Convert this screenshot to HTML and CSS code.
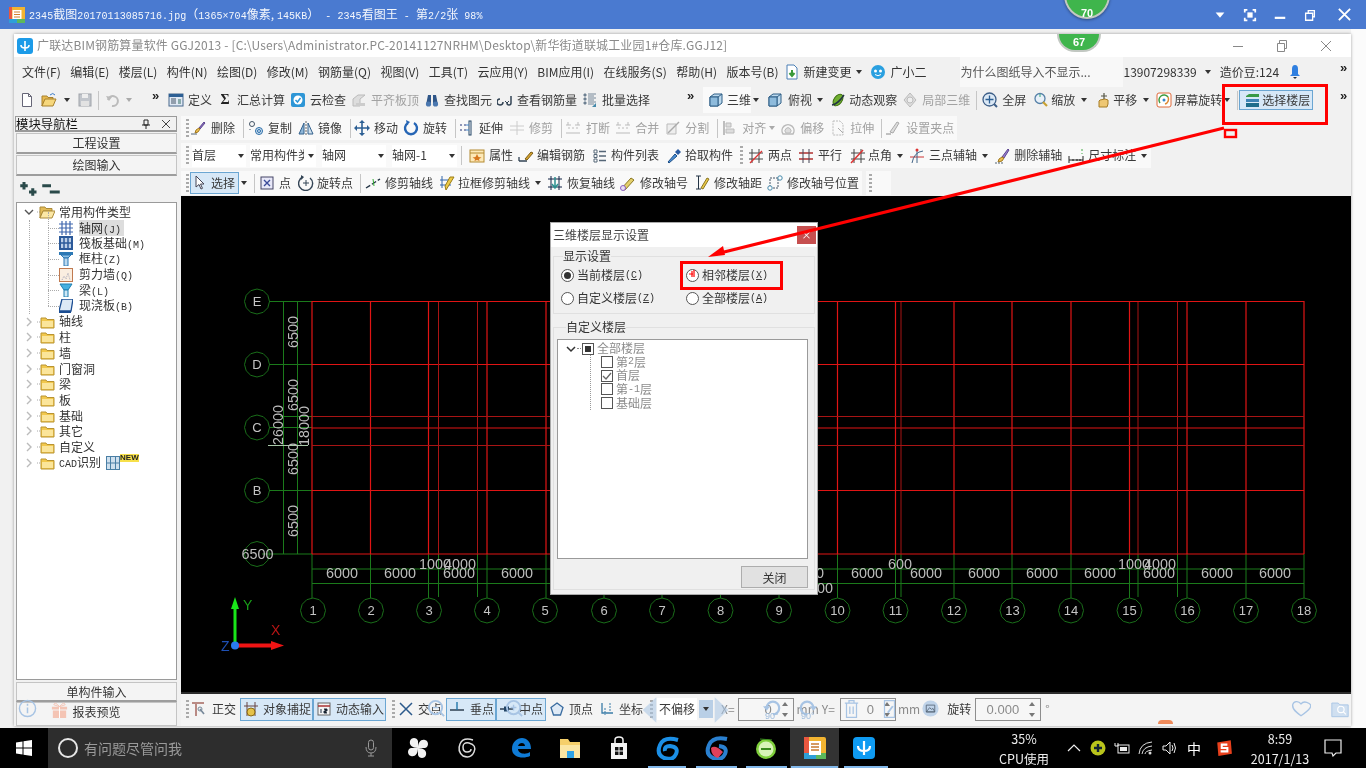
FILE: index.html
```html
<!DOCTYPE html>
<html lang="zh-CN">
<head>
<meta charset="utf-8">
<title>2345看图王</title>
<link rel="stylesheet" href="styles.css">
</head>
<body>
<svg class="sprite" xmlns="http://www.w3.org/2000/svg">
<defs>
<symbol id="i-new" viewBox="0 0 16 16"><path d="M3.5 1.5h6l3 3v10h-9z" fill="#fff" stroke="#667"/><path d="M9.5 1.5v3h3" fill="none" stroke="#667"/></symbol>
<symbol id="i-open" viewBox="0 0 16 16"><path d="M1 4h5l1 1.500h5v2H4L1 14z" fill="#e7b94e" stroke="#a8812c"/><path d="M1 14l3-7h11l-3 7z" fill="#f6d77c" stroke="#a8812c"/><path d="M9 3q3-3 5 0" fill="none" stroke="#3a7bc8"/></symbol>
<symbol id="i-save" viewBox="0 0 16 16"><rect x="2" y="2" width="12" height="12" fill="#c2c6cc" stroke="#a0a4aa"/><rect x="5" y="2" width="6" height="4" fill="#eee"/><rect x="4" y="9" width="8" height="5" fill="#e2e2e2"/></symbol>
<symbol id="i-undo" viewBox="0 0 16 16"><path d="M3 8a5 5 0 1 1 4 6" fill="none" stroke="#bbb" stroke-width="2"/><path d="M1 4l3 5 3-4z" fill="#bbb"/></symbol>
<symbol id="i-def" viewBox="0 0 16 16"><rect x="1" y="2" width="14" height="12" fill="#dfe8f4" stroke="#48688c"/><rect x="1" y="2" width="14" height="3" fill="#2c5f94"/><path d="M3 7h5M3 9h5M3 11h5" stroke="#456"/><rect x="10" y="7" width="3" height="5" fill="#8aa"/></symbol>
<symbol id="i-check" viewBox="0 0 16 16"><rect x="1" y="1" width="14" height="14" rx="2" fill="#2e96d6"/><circle cx="8" cy="8" r="4.500" fill="#fff"/><path d="M5.500 8l2 2 3-4" fill="none" stroke="#2e96d6" stroke-width="1.500"/></symbol>
<symbol id="i-flat" viewBox="0 0 16 16"><path d="M2 14V7l5-4 7 0-5 4v7z" fill="#ddd" stroke="#bbb"/><path d="M5 14h9v-3H5z" fill="#ccc"/></symbol>
<symbol id="i-bino" viewBox="0 0 16 16"><path d="M2 13l2-10h3v10zM9 13V3h3l2 10z" fill="#2f5688"/><circle cx="4.500" cy="12" r="2.600" fill="#4b78b0"/><circle cx="11.500" cy="12" r="2.600" fill="#4b78b0"/></symbol>
<symbol id="i-eye" viewBox="0 0 16 16"><path d="M6 10a3 3 0 1 1-3-3M14 4v7a2 2 0 0 1-4 0" fill="none" stroke="#345" stroke-width="1.500"/><path d="M8 9l2 2 2-2" fill="none" stroke="#345"/></symbol>
<symbol id="i-batch" viewBox="0 0 16 16"><path d="M2 2h2v2H2zM2 6h2v2H2zM2 10h2v2H2zM6 2h8M6 6h8M6 10h8M6 4h6M6 8h6M6 12h6" fill="#567" stroke="#789"/><path d="M10 15l4-4v4z" fill="#48a"/></symbol>
<symbol id="i-cube" viewBox="0 0 16 16"><path d="M2 5l4-3h8v9l-4 3H2z" fill="#bcd9ee" stroke="#2f5f86"/><path d="M2 5h8v9M10 5l4-3" fill="none" stroke="#2f5f86"/><path d="M2 5h8v9H2z" fill="#8ebbdc" stroke="#2f5f86"/></symbol>
<symbol id="i-orbit" viewBox="0 0 16 16"><ellipse cx="8" cy="8" rx="4" ry="6.500" transform="rotate(35 8 8)" fill="#6fae2f" stroke="#3d6e10"/><path d="M2 13Q8 12 14 3" fill="none" stroke="#234" stroke-width="1.500"/></symbol>
<symbol id="i-local" viewBox="0 0 16 16"><path d="M8 1l6 7-6 7-6-7z" fill="#ddd" stroke="#bbb"/><circle cx="8" cy="8" r="3" fill="#eee" stroke="#bbb"/></symbol>
<symbol id="i-full" viewBox="0 0 16 16"><circle cx="7.500" cy="7.500" r="6.500" fill="#dbe8f5" stroke="#3e5f88" stroke-width="1.300"/><path d="M7.500 3.500v8M3.500 7.500h8" stroke="#2c5f94" stroke-width="1.300"/><path d="M12 12l3 3" stroke="#3e5f88" stroke-width="2"/></symbol>
<symbol id="i-zoom" viewBox="0 0 16 16"><circle cx="7" cy="6.500" r="5" fill="#e8f0f8" stroke="#5580a8" stroke-width="1.300"/><path d="M10 10l4 4" stroke="#c8a030" stroke-width="2.200"/><path d="M7 2v3" stroke="#3a7"/></symbol>
<symbol id="i-hand" viewBox="0 0 16 16"><path d="M4 15V9l1-1 5-1 3 1v4l-1 3z" fill="#eec773" stroke="#a67c25"/><path d="M9 7V1M6 4h6" stroke="#554" stroke-width="1.200"/></symbol>
<symbol id="i-rot" viewBox="0 0 16 16"><rect x="1" y="1" width="14" height="14" rx="2" fill="#fff" stroke="#e06a3b"/><path d="M4 11a5 5 0 0 1 8-6" fill="none" stroke="#3f9c3f" stroke-width="1.500"/><path d="M12 5a5 5 0 0 1-3 7" fill="none" stroke="#d83" stroke-width="1.500"/><circle cx="8" cy="8" r="1.500" fill="#38c"/></symbol>
<symbol id="i-floors" viewBox="0 0 16 16"><path d="M2 4l3-2h10v3H2z" fill="#3a9a46"/><path d="M2 7h13v3H2z" fill="#3e84b5"/><path d="M2 11h13v4H2z" fill="#1f6d8c"/></symbol>
<symbol id="i-brush" viewBox="0 0 16 16"><path d="M9 8l5-6 1 1-5 6z" fill="#8a6fc0" stroke="#5d4790"/><path d="M9 8l1 1-2 3-3 1 1-3z" fill="#f0c050" stroke="#a07820"/><path d="M1 14h6" stroke="#567"/></symbol>
<symbol id="i-copy" viewBox="0 0 16 16"><circle cx="4" cy="4" r="2.500" fill="none" stroke="#456"/><path d="M2 9v2" stroke="#456" stroke-dasharray="1 1"/><circle cx="11" cy="11" r="3.500" fill="#cfe2f3" stroke="#2c6ea8"/><circle cx="11" cy="11" r="1.500" fill="none" stroke="#2c6ea8"/></symbol>
<symbol id="i-mirror" viewBox="0 0 16 16"><path d="M6 3L1 14h5z" fill="#8eb6d8" stroke="#33618c"/><path d="M10 3l5 11h-5z" fill="#cfe0ee" stroke="#33618c"/><path d="M8 1v14" stroke="#666" stroke-dasharray="2 1"/></symbol>
<symbol id="i-move" viewBox="0 0 16 16"><path d="M8 1v14M1 8h14" stroke="#2c5f94" stroke-width="1.600"/><path d="M8 0l3 3H5zM8 16l3-3H5zM0 8l3-3v6zM16 8l-3-3v6z" fill="#2c5f94"/></symbol>
<symbol id="i-spin" viewBox="0 0 16 16"><path d="M5 3a6 6 0 1 0 6 0" fill="none" stroke="#2766b5" stroke-width="2.400"/><path d="M3 0l4 2-3 3z" fill="#2766b5"/></symbol>
<symbol id="i-ext" viewBox="0 0 16 16"><path d="M1 5h2M5 5h2M1 10h2M5 10h2" stroke="#237"/><rect x="10" y="1" width="2" height="14" fill="#fff" stroke="#246"/><path d="M7 5h3M7 10h3" stroke="#48c"/></symbol>
<symbol id="i-trim" viewBox="0 0 16 16"><path d="M8 1v14M1 6h14M1 10h14" stroke="#ccc"/></symbol>
<symbol id="i-break" viewBox="0 0 16 16"><path d="M1 5h5M10 5h5M1 13h14M3 2v3M13 2v3" stroke="#bbb"/><path d="M3 8h10" stroke="#bbb" stroke-dasharray="2 2"/></symbol>
<symbol id="i-split" viewBox="0 0 16 16"><path d="M2 14V4h9v10z" fill="#eee" stroke="#bbb"/><path d="M3 13L14 2" stroke="#aaa" stroke-width="1.500"/></symbol>
<symbol id="i-align" viewBox="0 0 16 16"><path d="M3 1v14" stroke="#aaa" stroke-width="1.500"/><path d="M5 3h5v4H5zM5 9h8v4H5z" fill="#ddd" stroke="#bbb"/></symbol>
<symbol id="i-off" viewBox="0 0 16 16"><path d="M3 14a6 6 0 1 1 10 0z" fill="none" stroke="#bbb" stroke-width="1.500"/><path d="M6 13a3 3 0 1 1 4 0z" fill="#ddd" stroke="#bbb"/></symbol>
<symbol id="i-str" viewBox="0 0 16 16"><path d="M3 1h7l3 3v11H3z" fill="none" stroke="#bbb" stroke-dasharray="2 1"/><path d="M8 8l5 5" stroke="#aaa"/></symbol>
<symbol id="i-grip" viewBox="0 0 16 16"><path d="M5 12L12 2l2 1-6 10z" fill="#ddd" stroke="#aaa"/><path d="M1 14h5" stroke="#888"/></symbol>
<symbol id="i-prop" viewBox="0 0 16 16"><rect x="1" y="2" width="14" height="12" fill="#fde9b8" stroke="#b48a30"/><path d="M1 5h14" stroke="#b48a30"/><path d="M8 6l1.500 3 3 .5-2.500 1.500.5 2-2.500-1-2.500 1 .5-2L3.500 9.500l3-.5z" fill="#d77820"/></symbol>
<symbol id="i-edit" viewBox="0 0 16 16"><path d="M1 13h8M1 9v4" stroke="#345" stroke-width="1.300"/><path d="M7 11l6-7 2 1-6 7z" fill="#d8a530" stroke="#7a5b14"/></symbol>
<symbol id="i-list" viewBox="0 0 16 16"><path d="M2 2h3v3H2zM2 6.500h3v3H2zM2 11h3v3H2z" fill="#fff" stroke="#567"/><path d="M7 3.500h7M7 8h7M7 12.500h7" stroke="#567" stroke-width="1.500"/></symbol>
<symbol id="i-pick" viewBox="0 0 16 16"><path d="M2 14l7-8 2 2-8 7z" fill="#4b8fd6" stroke="#1f4f85"/><path d="M9 4l3-3 3 3-3 3z" fill="#2a5aa0"/></symbol>
<symbol id="i-two" viewBox="0 0 16 16"><path d="M4 1v14M11 1v14M1 5h14M1 11h14" stroke="#444"/><path d="M2 15L14 3" stroke="#d33" stroke-width="1.300"/></symbol>
<symbol id="i-par" viewBox="0 0 16 16"><path d="M1 5h14M1 11h14" stroke="#b03030" stroke-width="1.300"/><path d="M5 1v14M11 1v14" stroke="#445"/></symbol>
<symbol id="i-ang" viewBox="0 0 16 16"><path d="M4 1v14M11 1v14M1 5h14M1 11h14" stroke="#444"/><path d="M1 15L13 2" stroke="#d33" stroke-width="1.500"/></symbol>
<symbol id="i-three" viewBox="0 0 16 16"><path d="M1 9h14" stroke="#c33"/><path d="M8 2v13M3 15Q5 4 14 3" fill="none" stroke="#468"/><circle cx="8" cy="2" r="1.500" fill="#d33"/></symbol>
<symbol id="i-delax" viewBox="0 0 16 16"><path d="M8 9l6-8 1 1-5 8z" fill="#9a7fd0" stroke="#5d4790"/><path d="M8 9l2 1-2 3-4 1 1-3z" fill="#eec050" stroke="#a07820"/><path d="M1 15h8" stroke="#567" stroke-dasharray="2 1"/></symbol>
<symbol id="i-dim" viewBox="0 0 16 16"><path d="M1 8v7M15 8v7M1 12h14" stroke="#222"/><path d="M5 11v2M9 11v2M12 11v2" stroke="#222"/><path d="M14 1v2M14 5v1" stroke="#4a4"/></symbol>
<symbol id="i-cursor" viewBox="0 0 16 16"><path d="M5 1v11l3-2.500 2 4.500 1.500-.7-2-4.300H13z" fill="#fff" stroke="#445"/></symbol>
<symbol id="i-point" viewBox="0 0 16 16"><rect x="2" y="2" width="12" height="12" fill="#e8e8f8" stroke="#446"/><path d="M5 5l6 6M11 5l-6 6" stroke="#3a4a9a" stroke-width="1.400"/></symbol>
<symbol id="i-rotp" viewBox="0 0 16 16"><path d="M5 2a7 7 0 1 0 7 1" fill="none" stroke="#345" stroke-width="1.400"/><path d="M8 5v6M5 8h6" stroke="#345"/><path d="M3 0l3 2-3 3z" fill="#345"/></symbol>
<symbol id="i-trax" viewBox="0 0 16 16"><path d="M1 13L15 4" stroke="#234" stroke-width="1.400" stroke-dasharray="5 2"/><path d="M8 4l1 7" stroke="#3a3"/></symbol>
<symbol id="i-box" viewBox="0 0 16 16"><path d="M3 1v12M1 5h11M1 10h11" stroke="#36a"/><path d="M7 15L15 2l-4 0-5 9z" fill="#ecc947" stroke="#9a7d16"/></symbol>
<symbol id="i-rest" viewBox="0 0 16 16"><path d="M4 1v14M12 1v14M1 4h14M1 12h14" stroke="#124"/><path d="M8 2v10M5 9l3 4 3-4" fill="none" stroke="#2a8f8f" stroke-width="1.500"/></symbol>
<symbol id="i-eno" viewBox="0 0 16 16"><path d="M1 14L11 3l3 2-9 10z" fill="#e3cf6b" stroke="#8a7622"/><circle cx="3" cy="13" r="2.500" fill="#e8dff4" stroke="#8a60c0"/></symbol>
<symbol id="i-edist" viewBox="0 0 16 16"><path d="M2 1h5M4.500 1v13M2 14h5" stroke="#234"/><path d="M7 13l6-10 2 1-6 10z" fill="#ecc947" stroke="#8a7622"/></symbol>
<symbol id="i-epos" viewBox="0 0 16 16"><path d="M3 3h8v10H3z" fill="none" stroke="#456" stroke-dasharray="2 1"/><circle cx="13" cy="3" r="2.200" fill="#fff" stroke="#48a"/><circle cx="3" cy="13" r="2.200" fill="#fff" stroke="#48a"/></symbol>
<symbol id="i-ortho" viewBox="0 0 18 18"><path d="M2 3h12M6 3v13" stroke="#b98a84" stroke-width="2"/><path d="M10 9l4 5" stroke="#789" stroke-width="1.600"/><circle cx="10" cy="9" r="2" fill="none" stroke="#789"/></symbol>
<symbol id="i-snap" viewBox="0 0 16 16"><path d="M4 1v14M12 1v14M1 5h14" stroke="#644"/><circle cx="8" cy="11" r="4" fill="#e5c24a" stroke="#8a6a14"/></symbol>
<symbol id="i-dyn" viewBox="0 0 16 16"><rect x="2" y="2" width="12" height="12" fill="#f4f4f4" stroke="#666"/><path d="M2 5h12" stroke="#a33" stroke-width="1.500"/><path d="M5 8v4M8 8h3v2H8v2h3" stroke="#234"/></symbol>
<symbol id="i-cross" viewBox="0 0 16 16"><path d="M2 2l12 12M14 2L2 14" stroke="#2c5a8c" stroke-width="1.500"/></symbol>
<symbol id="i-perp" viewBox="0 0 16 16"><path d="M1 9h14" stroke="#234" stroke-width="1.400"/><path d="M8 1v8" stroke="#27a" stroke-width="1.400"/></symbol>
<symbol id="i-mid" viewBox="0 0 16 16"><path d="M1 8h14" stroke="#234" stroke-width="1.400"/><rect x="5" y="5.500" width="5" height="5" fill="#246"/></symbol>
<symbol id="i-apex" viewBox="0 0 16 16"><path d="M8 2l6 4.500-2.500 7.500h-7L2 6.500z" fill="#dfeaf6" stroke="#3a6ca0" stroke-width="1.300"/></symbol>
<symbol id="i-coord" viewBox="0 0 16 16"><path d="M3 2v10h11" fill="none" stroke="#3a7ca8" stroke-width="1.300"/><path d="M6 7v7M11 2v9" stroke="#3a7ca8" stroke-dasharray="2 1"/></symbol>
<symbol id="i-folder" viewBox="0 0 18 14"><path d="M0 7h4" stroke="#aaa" stroke-dasharray="1 1"/><path d="M4 3h5l1 1.500h7V13H4z" fill="#f2c84d" stroke="#b89332"/><path d="M5 6h11v6H5z" fill="#fbe59a"/></symbol>
<symbol id="i-fopen" viewBox="0 0 18 14"><path d="M0 7h3" stroke="#aaa" stroke-dasharray="1 1"/><path d="M3 2h5l1 1.500h6V6H6l-3 7z" fill="#e3bb57" stroke="#ab8a38"/><path d="M3 13l3-7h12l-3 7z" fill="#fbe7a5" stroke="#ab8a38"/></symbol>
<symbol id="t-grid" viewBox="0 0 14 14"><path d="M0 3h14M0 7h14M0 11h14M3 0v14M7 0v14M11 0v14" stroke="#3f67ad" stroke-width="1.200"/></symbol>
<symbol id="t-raft" viewBox="0 0 14 14"><rect width="14" height="14" fill="#2c5a9a"/><path d="M2 2h10v10H2z" fill="#bcd0e8"/><path d="M5 0v14M9 0v14M0 7h14" stroke="#2c5a9a" stroke-width="1.500"/></symbol>
<symbol id="t-col" viewBox="0 0 14 14"><path d="M0 0h14v3H0z" fill="#2d79b5"/><path d="M2 3h10L9 6H5z" fill="#8ec0e4" stroke="#2d79b5"/><path d="M5 6h4v8H5z" fill="#bcd9ee" stroke="#2d79b5"/></symbol>
<symbol id="t-wall" viewBox="0 0 14 14"><rect x=".5" y=".5" width="13" height="13" fill="#fbeee0" stroke="#c07a50"/><path d="M3 12l2-4 2 3 2-6 2 7" fill="none" stroke="#aab" stroke-dasharray="1 1"/></symbol>
<symbol id="t-beam" viewBox="0 0 14 14"><path d="M1 1h12L9 7H5z" fill="#46b0e0" stroke="#1f7fb0"/><path d="M5 7h4v7H5z" fill="#cfe8f6" stroke="#1f7fb0"/></symbol>
<symbol id="t-slab" viewBox="0 0 14 14"><path d="M3 0h11l-2 12H0z" fill="#dce9f6" stroke="#1b4d92" stroke-width="1.300"/><path d="M0 12h12v2H0z" fill="#1b4d92"/></symbol>
</defs>
</svg>

<div class="screen">
  <header class="viewer-bar">
    <svg class="viewer-logo" viewBox="0 0 16 16"><rect width="16" height="16" fill="#f2b431"/><rect x="0" y="0" width="3" height="16" fill="#e9573f"/><rect x="0" y="12" width="16" height="4" fill="#2e9fd8"/><rect x="8" y="12" width="8" height="4" fill="#5cb85c"/><rect x="3.500" y="3" width="9" height="9" fill="#fff"/><path d="M5 5h6M5 7.500h6M5 10h6" stroke="#d08030"/></svg>
    <div class="viewer-title"><span class="lt">2345</span>截图<span class="lt">20170113085716.jpg</span>（<span class="lt">1365×704</span>像素, <span class="lt">145KB</span>）<span class="lt"> - 2345</span>看图王<span class="lt"> - </span>第<span class="lt">2/2</span>张<span class="lt"> 98%</span></div>
    <div class="viewer-ctrls">
      <svg class="vc" viewBox="0 0 16 16"><path d="M3 5h10l-5 6z" fill="#fff"/></svg>
      <svg class="vc" viewBox="0 0 16 16"><path d="M2 5V2h3M11 2h3v3M14 11v3h-3M5 14H2v-3" fill="none" stroke="#fff" stroke-width="2"/><rect x="5" y="5" width="6" height="6" fill="#fff"/></svg>
      <svg class="vc" viewBox="0 0 16 16"><rect x="2" y="10" width="12" height="2.500" fill="#fff"/></svg>
      <svg class="vc" viewBox="0 0 16 16"><path d="M3 6h8v8H3zM6 6V3h7v7h-2" fill="none" stroke="#fff" stroke-width="1.500"/></svg>
      <svg class="vc vc-x" viewBox="0 0 16 16"><path d="M2 2l12 12M14 2L2 14" stroke="#fff" stroke-width="2"/></svg>
    </div>
  </header>

  <div class="stage">
    <main class="app">
      <div class="app-title">
        <svg class="app-logo" viewBox="0 0 16 16"><rect width="16" height="16" rx="3" fill="#1c9be8"/><path d="M8 3v10M4 7q0 3 4 3t4-3" fill="none" stroke="#fff" stroke-width="1.600"/></svg>
        <span class="app-name">广联达BIM钢筋算量软件 GGJ2013 - [C:\Users\Administrator.PC-20141127NRHM\Desktop\新华街道联城工业园1#仓库.GGJ12]</span>
        <div class="win-ctrls">
          <svg class="wc" viewBox="0 0 12 12"><path d="M1 6.500h10" stroke="#888"/></svg>
          <svg class="wc" viewBox="0 0 12 12"><path d="M1.500 3.500h7v8h-7zM3.500 3.500V.5h7v8h-2" fill="none" stroke="#888"/></svg>
          <svg class="wc" viewBox="0 0 12 12"><path d="M1 1l10 10M11 1L1 11" stroke="#888"/></svg>
        </div>
      </div>

      <nav class="menu">
        <span class="mi m8">文件(F)</span><span class="mi mg">编辑(E)</span><span class="mi mg">楼层(L)</span><span class="mi mg">构件(N)</span><span class="mi mg">绘图(D)</span><span class="mi mg">修改(M)</span><span class="mi mg">钢筋量(Q)</span><span class="mi mg">视图(V)</span><span class="mi mg">工具(T)</span><span class="mi mg">云应用(Y)</span><span class="mi mg">BIM应用(I)</span><span class="mi mg">在线服务(S)</span><span class="mi mg">帮助(H)</span><span class="mi mg">版本号(B)</span>
        <svg class="ic m6" viewBox="0 0 16 16"><path d="M3 1h7l3 3v11H3z" fill="#fff" stroke="#4a7fb5"/><path d="M8 6v5M5.500 9L8 12l2.500-3" fill="none" stroke="#3a9a3a" stroke-width="2"/></svg>
        <span class="mi m3">新建变更</span><span class="dd m4"></span>
        <svg class="ic m7" viewBox="0 0 16 16"><circle cx="8" cy="8" r="7" fill="#2aa0e0"/><circle cx="5.500" cy="7" r="1.500" fill="#fff"/><circle cx="10.500" cy="7" r="1.500" fill="#fff"/><path d="M5 10.500q3 2.500 6 0" stroke="#fff" fill="none"/></svg>
        <span class="mi m4">广小二</span>
        <span class="mi hint">为什么图纸导入不显示...</span>
        <span class="mi acct">13907298339</span><span class="dd m7"></span>
        <span class="mi m8">造价豆:124</span>
        <svg class="ic m8" viewBox="0 0 16 16"><path d="M8 1q3 0 3 4v5l2 2H3l2-2V5q0-4 3-4z" fill="#2f7fe0"/><path d="M6 13h4l-2 2z" fill="#234"/></svg>
        <span class="chev chev-end"></span>
      </nav>

      <div class="tb tb1">
        <svg class="ic m5"><use href="#i-new"/></svg>
        <svg class="ic m6"><use href="#i-open"/></svg><span class="dd m6"></span>
        <svg class="ic m6"><use href="#i-save"/></svg><span class="sep m5"></span>
        <svg class="ic m6"><use href="#i-undo"/></svg><span class="dd m4 off"></span>
        <span class="chev m19"></span>
        <span class="tool m8"><svg class="ic"><use href="#i-def"/></svg>定义</span>
        <span class="tool m5"><span class="sigma">Σ</span>汇总计算</span>
        <span class="tool m5"><svg class="ic"><use href="#i-check"/></svg>云检查</span>
        <span class="tool m5 dis"><svg class="ic"><use href="#i-flat"/></svg>平齐板顶</span>
        <span class="tool m5"><svg class="ic"><use href="#i-bino"/></svg>查找图元</span>
        <span class="tool m5"><svg class="ic"><use href="#i-eye"/></svg>查看钢筋量</span>
        <span class="tool m5"><svg class="ic"><use href="#i-batch"/></svg>批量选择</span>
        <span class="chev m37"></span>
        <span class="pane3d"><span class="tool g3"><svg class="ic"><use href="#i-cube"/></svg>三维</span></span>
        <span class="dd m1"></span>
        <span class="tool m7 g5"><svg class="ic"><use href="#i-cube"/></svg>俯视</span><span class="dd m4"></span>
        <span class="tool m6 g3"><svg class="ic"><use href="#i-orbit"/></svg>动态观察</span>
        <span class="tool m5 dis"><svg class="ic"><use href="#i-local"/></svg>局部三维</span><span class="sep m6"></span>
        <span class="tool m5"><svg class="ic"><use href="#i-full"/></svg>全屏</span>
        <span class="tool m7 g2"><svg class="ic"><use href="#i-zoom"/></svg>缩放</span><span class="dd m5"></span>
        <span class="tool m7 g2"><svg class="ic"><use href="#i-hand"/></svg>平移</span><span class="dd m5"></span>
        <span class="tool m6 g2"><svg class="ic"><use href="#i-rot"/></svg>屏幕旋转</span><span class="dd m1"></span><span class="sep m6"></span>
        <span class="btn-on tool floors g2"><svg class="ic"><use href="#i-floors"/></svg>选择楼层</span>
        <span class="chev chev-end"></span>
      </div>

      <div class="work">
        <aside class="nav">
          <div class="nav-head"><span>模块导航栏</span>
            <svg class="nh-ic" viewBox="0 0 10 10"><path d="M3 1h4v5H3zM1 6h8M5 6v4" fill="none" stroke="#222"/></svg>
            <svg class="nh-ic" viewBox="0 0 10 10"><path d="M1 1l8 8M9 1L1 9" stroke="#444"/></svg>
          </div>
          <div class="nav-btn">工程设置</div>
          <div class="nav-btn">绘图输入</div>
          <div class="nav-tools">
            <svg class="nt" viewBox="0 0 14 12"><path d="M3 0v6M0 3h6M10 5v6M7 8h6" stroke="#2a4a4a" stroke-width="2.400"/></svg>
            <svg class="nt" viewBox="0 0 14 12"><path d="M0 3h7M6 8h8" stroke="#2a4a4a" stroke-width="2.400"/></svg>
          </div>
          <div class="tree">
            <div class="node"><svg class="tw" viewBox="0 0 10 10"><path d="M1 3l4 4 4-4" fill="none" stroke="#555" stroke-width="1.400"/></svg><svg class="fd"><use href="#i-fopen"/></svg><span>常用构件类型</span></div>
            <div class="kids">
              <div class="kid sel-kid"><svg class="ki"><use href="#t-grid"/></svg><span class="sel">轴网<span class="lt">(J)</span></span></div>
              <div class="kid"><svg class="ki"><use href="#t-raft"/></svg><span>筏板基础<span class="lt">(M)</span></span></div>
              <div class="kid"><svg class="ki"><use href="#t-col"/></svg><span>框柱<span class="lt">(Z)</span></span></div>
              <div class="kid"><svg class="ki"><use href="#t-wall"/></svg><span>剪力墙<span class="lt">(Q)</span></span></div>
              <div class="kid"><svg class="ki"><use href="#t-beam"/></svg><span>梁<span class="lt">(L)</span></span></div>
              <div class="kid"><svg class="ki"><use href="#t-slab"/></svg><span>现浇板<span class="lt">(B)</span></span></div>
            </div>
            <div class="node"><svg class="tw" viewBox="0 0 10 10"><path d="M3 1l4 4-4 4" fill="none" stroke="#bbb" stroke-width="1.400"/></svg><svg class="fd"><use href="#i-folder"/></svg><span>轴线</span></div>
            <div class="node"><svg class="tw" viewBox="0 0 10 10"><path d="M3 1l4 4-4 4" fill="none" stroke="#bbb" stroke-width="1.400"/></svg><svg class="fd"><use href="#i-folder"/></svg><span>柱</span></div>
            <div class="node"><svg class="tw" viewBox="0 0 10 10"><path d="M3 1l4 4-4 4" fill="none" stroke="#bbb" stroke-width="1.400"/></svg><svg class="fd"><use href="#i-folder"/></svg><span>墙</span></div>
            <div class="node"><svg class="tw" viewBox="0 0 10 10"><path d="M3 1l4 4-4 4" fill="none" stroke="#bbb" stroke-width="1.400"/></svg><svg class="fd"><use href="#i-folder"/></svg><span>门窗洞</span></div>
            <div class="node"><svg class="tw" viewBox="0 0 10 10"><path d="M3 1l4 4-4 4" fill="none" stroke="#bbb" stroke-width="1.400"/></svg><svg class="fd"><use href="#i-folder"/></svg><span>梁</span></div>
            <div class="node"><svg class="tw" viewBox="0 0 10 10"><path d="M3 1l4 4-4 4" fill="none" stroke="#bbb" stroke-width="1.400"/></svg><svg class="fd"><use href="#i-folder"/></svg><span>板</span></div>
            <div class="node"><svg class="tw" viewBox="0 0 10 10"><path d="M3 1l4 4-4 4" fill="none" stroke="#bbb" stroke-width="1.400"/></svg><svg class="fd"><use href="#i-folder"/></svg><span>基础</span></div>
            <div class="node"><svg class="tw" viewBox="0 0 10 10"><path d="M3 1l4 4-4 4" fill="none" stroke="#bbb" stroke-width="1.400"/></svg><svg class="fd"><use href="#i-folder"/></svg><span>其它</span></div>
            <div class="node"><svg class="tw" viewBox="0 0 10 10"><path d="M3 1l4 4-4 4" fill="none" stroke="#bbb" stroke-width="1.400"/></svg><svg class="fd"><use href="#i-folder"/></svg><span>自定义</span></div>
            <div class="node"><svg class="tw" viewBox="0 0 10 10"><path d="M3 1l4 4-4 4" fill="none" stroke="#bbb" stroke-width="1.400"/></svg><svg class="fd"><use href="#i-folder"/></svg><span><span class="lt">CAD</span>识别</span>
              <svg class="cad-ic" viewBox="0 0 14 14"><rect x=".5" y=".5" width="13" height="13" fill="#cfe0ee" stroke="#4a7fa5"/><path d="M4.500 1v12M9.500 1v12M1 7h12" stroke="#4a7fa5"/></svg><span class="new">NEW</span></div>
          </div>
          <div class="nav-btn nav-foot">单构件输入</div>
          <div class="nav-btn nav-foot nb-last">报表预览</div>
        </aside>

        <section class="main">
          <div class="tb tb2"><div class="strip s2">
            <span class="grip m5"></span>
            <span class="tool m1 g5"><svg class="ic"><use href="#i-brush"/></svg>删除</span><span class="sep m8"></span>
            <span class="tool m4"><svg class="ic"><use href="#i-copy"/></svg>复制</span>
            <span class="tool m6"><svg class="ic"><use href="#i-mirror"/></svg>镜像</span><span class="sep m8"></span>
            <span class="tool m3"><svg class="ic"><use href="#i-move"/></svg>移动</span>
            <span class="tool m5"><svg class="ic"><use href="#i-spin"/></svg>旋转</span><span class="sep m8"></span>
            <span class="tool m3"><svg class="ic"><use href="#i-ext"/></svg>延伸</span>
            <span class="tool m6 dis"><svg class="ic"><use href="#i-trim"/></svg>修剪</span><span class="sep m8"></span>
            <span class="tool m3 g5 dis"><svg class="ic"><use href="#i-break"/></svg>打断</span>
            <span class="tool m5 dis"><svg class="ic"><use href="#i-break"/></svg>合并</span>
            <span class="tool m6 dis"><svg class="ic"><use href="#i-split"/></svg>分割</span><span class="sep m8"></span>
            <span class="tool m3 g5 dis"><svg class="ic"><use href="#i-align"/></svg>对齐</span><span class="dd m2 off"></span>
            <span class="tool m4 dis"><svg class="ic"><use href="#i-off"/></svg>偏移</span>
            <span class="tool m6 dis"><svg class="ic"><use href="#i-str"/></svg>拉伸</span><span class="sep m7"></span>
            <span class="tool m3 g5 dis"><svg class="ic"><use href="#i-grip"/></svg>设置夹点</span>
          </div></div>

          <div class="tb tb3"><div class="strip s3">
            <span class="grip m5"></span>
            <span class="combo m3 w54">首层<span class="dd"></span></span>
            <span class="combo m4 w66"><span class="cut">常用构件类</span><span class="dd"></span></span>
            <span class="combo m6 w64">轴网<span class="dd"></span></span>
            <span class="combo m6 w65">轴网-1<span class="dd"></span></span>
            <span class="sep m4"></span>
            <span class="tool m7"><svg class="ic"><use href="#i-prop"/></svg>属性</span>
            <span class="tool m5 g3"><svg class="ic"><use href="#i-edit"/></svg>编辑钢筋</span>
            <span class="tool m7 g3"><svg class="ic"><use href="#i-list"/></svg>构件列表</span>
            <span class="tool m7 g3"><svg class="ic"><use href="#i-pick"/></svg>拾取构件</span>
            <span class="grip m7"></span>
            <span class="tool m5"><svg class="ic"><use href="#i-two"/></svg>两点</span>
            <span class="tool m6"><svg class="ic"><use href="#i-par"/></svg>平行</span>
            <span class="tool m8 g2"><svg class="ic"><use href="#i-ang"/></svg>点角</span><span class="dd m4"></span>
            <span class="tool m5"><svg class="ic"><use href="#i-three"/></svg>三点辅轴</span><span class="dd m4"></span>
            <span class="tool m5"><svg class="ic"><use href="#i-delax"/></svg>删除辅轴</span>
            <span class="tool m6"><svg class="ic"><use href="#i-dim"/></svg>尺寸标注</span><span class="dd m4"></span>
          </div></div>

          <div class="tb tb4"><div class="strip s4">
            <span class="grip m5"></span>
            <span class="btn-on tool sel-btn m1"><svg class="ic"><use href="#i-cursor"/></svg>选择</span><span class="dd m1"></span>
            <span class="sep m6"></span>
            <span class="tool m4"><svg class="ic"><use href="#i-point"/></svg>点</span>
            <span class="tool m7 g3"><svg class="ic"><use href="#i-rotp"/></svg>旋转点</span><span class="sep m7"></span>
            <span class="tool m4"><svg class="ic"><use href="#i-trax"/></svg>修剪轴线</span>
            <span class="tool m6 g3"><svg class="ic"><use href="#i-box"/></svg>拉框修剪轴线</span><span class="dd m4"></span>
            <span class="tool m5"><svg class="ic"><use href="#i-rest"/></svg>恢复轴线</span>
            <span class="tool m5"><svg class="ic"><use href="#i-eno"/></svg>修改轴号</span>
            <span class="tool m6"><svg class="ic"><use href="#i-edist"/></svg>修改轴距</span>
            <span class="tool m5"><svg class="ic"><use href="#i-epos"/></svg>修改轴号位置</span>
          </div><div class="strip s4b"><span class="grip"></span></div></div>

          <div class="cad">
            <svg class="cad-svg" viewBox="181 196 1170 496" xmlns="http://www.w3.org/2000/svg">
              <defs><polygon id="bub" points="12.500,0 10.800,6.250 6.250,10.800 0,12.500 -6.250,10.800 -10.800,6.250 -12.500,0 -10.800,-6.250 -6.250,-10.800 0,-12.500 6.250,-10.800 10.800,-6.250"/></defs>
              <g class="g-line">
                <path d="M269 301.500H312M269 364.500H312M269 427.500H312M269 490.500H312M262 554H312M283.500 301V554M297.500 301V554M280 416.500H312"/>
                <path d="M312 569H1304M312 583.500H1304"/>
                <path d="M312 554V598M370.500 554V598M428.500 554V598M438.500 554V597M477.500 554V597M487 554V598M546 554V598M604 554V598M662 554V598M720.500 554V598M779 554V598M837.500 554V598M895.500 554V598M901 554V597M954 554V598M1012 554V598M1071 554V598M1129.500 554V598M1138 554V597M1177.500 554V597M1187 554V598M1246 554V598M1304 554V598"/>
              </g>
              <g class="bubbles">
                <use href="#bub" x="257" y="301.500"/><use href="#bub" x="257" y="364.500"/><use href="#bub" x="257" y="427.500"/><use href="#bub" x="257" y="490.500"/><use href="#bub" x="257" y="554"/>
                <use href="#bub" x="313" y="610.500"/><use href="#bub" x="371" y="610.500"/><use href="#bub" x="429" y="610.500"/><use href="#bub" x="487" y="610.500"/><use href="#bub" x="545" y="610.500"/><use href="#bub" x="604" y="610.500"/><use href="#bub" x="662" y="610.500"/><use href="#bub" x="720.500" y="610.500"/><use href="#bub" x="779" y="610.500"/><use href="#bub" x="837.500" y="610.500"/><use href="#bub" x="895.500" y="610.500"/><use href="#bub" x="954" y="610.500"/><use href="#bub" x="1012.500" y="610.500"/><use href="#bub" x="1071" y="610.500"/><use href="#bub" x="1129.500" y="610.500"/><use href="#bub" x="1187.500" y="610.500"/><use href="#bub" x="1246" y="610.500"/><use href="#bub" x="1304" y="610.500"/>
              </g>
              <g class="r-line">
                <path d="M312 301.500H1304M312 364.500H1304M312 428H1304M312 490.500H1304M312 554H1304"/>
                <path d="M312 301V554M370.500 301V554M428.500 301V554M487 301V554M546 301V554M604 301V554M662 301V554M720.500 301V554M779 301V554M837.500 301V554M895.500 301V554M954 301V554M1012 301V554M1071 301V554M1129.500 301V554M1187 301V554M1246 301V554M1304 301V554"/>
              </g>
              <g class="r-dim">
                <path d="M312 416.500H1304M312 445.500H1304M438.500 302V554M477.500 302V554M901 302V554M1138 302V554M1177.500 302V554"/>
              </g>
              <path class="w-tick" d="M268 445.500H308"/>
              <g class="dim-t">
                <text x="342" y="578">6000</text><text x="400" y="578">6000</text><text x="459" y="578">6000</text><text x="517" y="578">6000</text><text x="808" y="578">6000</text><text x="867" y="578">6000</text><text x="926" y="578">6000</text><text x="984" y="578">6000</text><text x="1042" y="578">6000</text><text x="1100" y="578">6000</text><text x="1159" y="578">6000</text><text x="1217" y="578">6000</text><text x="1275" y="578">6000</text>
                <text x="435" y="569">1000</text><text x="460" y="569">4000</text><text x="1134" y="569">1000</text><text x="1160" y="569">4000</text><text x="900" y="569">600</text>
                <text x="809" y="593">102000</text>
                <text x="257.500" y="559">6500</text>
                <text transform="translate(298 332) rotate(-90)">6500</text>
                <text transform="translate(298 395) rotate(-90)">6500</text>
                <text transform="translate(298 459) rotate(-90)">6500</text>
                <text transform="translate(298 521) rotate(-90)">6500</text>
                <text transform="translate(283 425) rotate(-90)">26000</text>
                <text transform="translate(309 426) rotate(-90)">18000</text>
              </g>
              <g class="bub-t">
                <text x="257" y="306">E</text><text x="257" y="369">D</text><text x="257" y="432">C</text><text x="257" y="495">B</text>
                <text x="313" y="615">1</text><text x="371" y="615">2</text><text x="429" y="615">3</text><text x="487" y="615">4</text><text x="545" y="615">5</text><text x="604" y="615">6</text><text x="662" y="615">7</text><text x="720.500" y="615">8</text><text x="779" y="615">9</text><text x="837.500" y="615">10</text><text x="895.500" y="615">11</text><text x="954" y="615">12</text><text x="1012.500" y="615">13</text><text x="1071" y="615">14</text><text x="1129.500" y="615">15</text><text x="1187.500" y="615">16</text><text x="1246" y="615">17</text><text x="1304" y="615">18</text>
              </g>
              <path d="M235 645V606" stroke="#19e619" stroke-width="3"/><path d="M235 597l-4 12h8z" fill="#19e619"/>
              <path d="M235 645.500H274" stroke="#f01414" stroke-width="4"/><path d="M284 645.500l-13-4.500v9z" fill="#f01414"/>
              <circle cx="235" cy="645.500" r="4" fill="#2a7bf0"/>
              <text class="ax ax-y" x="243" y="610">Y</text><text class="ax ax-x" x="271" y="635">X</text><text class="ax ax-z" x="221" y="651">Z</text>
            </svg>
          </div>

          <div class="status">
            <span class="grip m5"></span>
            <span class="tool m1 g4"><svg class="ic ic18"><use href="#i-ortho"/></svg>正交</span>
            <span class="btn-on tool st-btn m4 w73"><svg class="ic"><use href="#i-snap"/></svg>对象捕捉</span>
            <span class="btn-on tool st-btn w73"><svg class="ic"><use href="#i-dyn"/></svg>动态输入</span>
            <span class="grip m6"></span>
            <span class="tool m3"><svg class="ic"><use href="#i-cross"/></svg>交点</span>
            <span class="btn-on tool st-btn m4 w50 g5"><svg class="ic"><use href="#i-perp"/></svg>垂点</span>
            <span class="btn-on tool st-btn w50 g4"><svg class="ic"><use href="#i-mid"/></svg>中点</span>
            <span class="tool m3"><svg class="ic"><use href="#i-apex"/></svg>顶点</span>
            <span class="tool m6"><svg class="ic"><use href="#i-coord"/></svg>坐标</span>
            <span class="grip m7"></span>
            <span class="st-combo m4">不偏移</span>
            <span class="st-dd m2"><span class="dd"></span></span>
            <span class="lab m8">X=</span>
            <span class="field m3 w56"><span class="val">0</span><span class="spin"><i></i><i class="dn"></i></span></span>
            <span class="lab m3">mm</span><span class="lab m3">Y=</span>
            <span class="field m5 w56"><span class="val">0</span><span class="spin"><i></i><i class="dn"></i></span></span>
            <span class="lab m2">mm</span>
            <span class="st-txt m27">旋转</span>
            <span class="field m4 w66"><span class="val">0.000</span><span class="spin"><i></i><i class="dn"></i></span></span>
            <span class="lab m4">°</span>
          </div>
        </section>
      </div>
    </main>
  </div>

  <footer class="taskbar">
    <div class="start"><svg class="win" viewBox="0 0 16 16"><path d="M0 2.500L6.500 1.500v6H0zM7.500 1.300L16 0v7.500H7.500zM0 8.500h6.500v6L0 13.500zM7.500 8.500H16V16l-8.500-1.300z" fill="#fff"/></svg></div>
    <div class="search"><span class="ring"></span><span class="s-text">有问题尽管问我</span>
      <svg class="mic" viewBox="0 0 12 18"><rect x="3.500" y="1" width="5" height="10" rx="2.500" fill="none" stroke="#999"/><path d="M1 8q0 6 5 6t5-6M6 14v3M3 17h6" fill="none" stroke="#999"/></svg></div>
    <div class="task-icons">
      <span class="ti"><svg viewBox="0 0 24 24"><path d="M12 12C6 12 3 9 4 5s7-4 8 0zM12 12c0-6 3-9 7-8s4 7 0 8zM12 12c6 0 9 3 8 7s-7 4-8 0zM12 12c0 6-3 9-7 8s-4-7 0-8z" fill="#f2f2f2"/></svg></span>
      <span class="ti ti-b"><svg viewBox="0 0 24 24"><path d="M18 4Q8 1 5 8t3 12q8 3 11-4t-5-9q-6-1-6 4t4 5 4-3" fill="none" stroke="#ddd" stroke-width="1.500"/></svg></span>
      <span class="ti"><svg viewBox="0 0 24 24"><path d="M3 13C3 6 8 2 13 2s9 4 9 11H9c0 5 8 6 12 3v4c-6 3-18 2-18-7zm6-3h7c0-4-6-4-7 0z" fill="#0f7bd6"/></svg></span>
      <span class="ti"><svg viewBox="0 0 24 24"><path d="M2 3h8l2 3h10v16H2z" fill="#f5cf6a"/><path d="M2 9h20v13H2z" fill="#fbe6a3"/><rect x="9" y="15" width="7" height="7" fill="#2fa3e6"/></svg></span>
      <span class="ti"><svg viewBox="0 0 24 24"><path d="M4 7h16v16H4z" fill="#f4f4f4"/><path d="M8 7V4q0-3 4-3t4 3v3" fill="none" stroke="#f4f4f4" stroke-width="1.500"/><path d="M8 11h3.500v3.500H8zM12.500 11H16v3.500h-3.500zM8 15.500h3.500V19H8zM12.500 15.500H16V19h-3.500z" fill="#111"/></svg></span>
      <span class="ti"><svg viewBox="0 0 24 24"><path d="M22 4Q8 0 4 9t4 13q9 3 12-4t-6-8q-6 0-5 5" fill="none" stroke="#1b8fe6" stroke-width="4"/></svg></span>
      <span class="ti"><svg viewBox="0 0 24 24"><path d="M22 3Q8 0 4 9t4 13q9 3 12-4t-6-8" fill="none" stroke="#2a80d0" stroke-width="4"/><path d="M6 12q4-4 12 4l-5 6q-7-2-7-10z" fill="#e0405a"/></svg></span>
      <span class="ti"><svg viewBox="0 0 24 24"><circle cx="12" cy="13" r="10" fill="#7fcf3c"/><circle cx="12" cy="13" r="7.500" fill="#d8f3b8"/><path d="M7 13h10" stroke="#3a8a1e" stroke-width="2"/><path d="M6 3l12 1" stroke="#3a8a1e"/></svg></span>
      <span class="ti ti-act"><svg viewBox="0 0 24 24"><rect x="1" y="1" width="22" height="22" rx="2" fill="#f2b431"/><rect x="1" y="1" width="5" height="22" fill="#e9573f"/><rect x="1" y="17" width="22" height="6" fill="#2e9fd8"/><rect x="13" y="17" width="10" height="6" fill="#5cb85c"/><rect x="6" y="5" width="12" height="14" fill="#fff"/><path d="M8 8h8M8 11h8M8 14h8" stroke="#c87a30" stroke-width="1.500"/></svg></span>
      <span class="ti"><svg viewBox="0 0 24 24"><rect x="1" y="1" width="22" height="22" rx="4" fill="#0f9bf2"/><path d="M12 5v14M6 10q0 5 6 5t6-5" fill="none" stroke="#fff" stroke-width="2.200"/></svg></span>
    </div>
    <div class="cpu"><span>35%</span><span>CPU使用</span></div>
    <div class="tray">
      <svg class="tr" viewBox="0 0 16 16"><path d="M2 11l6-6 6 6" fill="none" stroke="#eee" stroke-width="1.200"/></svg>
      <svg class="tr" viewBox="0 0 16 16"><circle cx="8" cy="8" r="7.500" fill="#b9c41c"/><path d="M8 4v8M4 8h8" stroke="#123" stroke-width="2.400"/></svg>
      <svg class="tr" viewBox="0 0 16 16"><rect x="4" y="5" width="11" height="8" fill="none" stroke="#eee"/><rect x="6" y="7" width="7" height="4" fill="#eee"/><path d="M1 3v3h3V3" stroke="#eee" fill="none"/></svg>
      <svg class="tr" viewBox="0 0 16 16"><path d="M1 14q1-11 13-12M4 14q1-7 10-8M7 14q0-3 7-4" fill="none" stroke="#ddd"/><circle cx="12" cy="13" r="1.500" fill="#ddd"/></svg>
      <svg class="tr" viewBox="0 0 16 16"><path d="M1 6h3l4-4v12l-4-4H1z" fill="none" stroke="#eee"/><path d="M10 5q2 3 0 6M12 3q3 5 0 10" fill="none" stroke="#eee"/></svg>
      <span class="ime">中</span>
      <svg class="tr sg" viewBox="0 0 16 16"><path d="M2 3L14 1l1 12-12 2z" fill="#e8401c"/><path d="M11 5H6v3h5v3H5" fill="none" stroke="#fff" stroke-width="1.800"/></svg>
    </div>
    <div class="clock"><span>8:59</span><span>2017/1/13</span></div>
    <svg class="notif" viewBox="0 0 18 18"><path d="M1 1h16v13h-5l-3 3-1-3H1z" fill="none" stroke="#eee" stroke-width="1.200"/></svg>
    <div class="runs"><i class="r1"></i><i class="r2"></i><i class="r3"></i><i class="r4"></i><i class="r5"></i></div>
  </footer>

  <!-- pale controls of the picture viewer floating over the photographed window -->
  <div class="ghosts">
    <svg class="gh g-info" viewBox="0 0 20 20"><circle cx="10" cy="10" r="8.500" fill="none" stroke="#a8c4e4" stroke-width="1.500"/><path d="M10 5v2M10 9v6" stroke="#a8c4e4" stroke-width="1.600"/></svg>
    <svg class="gh g-gift" viewBox="0 0 20 20"><path d="M2 7h16v3H2zM3 11h14v8H3z" fill="#f4c4b4"/><path d="M10 7v12" stroke="#fff"/><path d="M10 7Q5 1 4 5l6 2q5-6 6-2z" fill="none" stroke="#f4c4b4"/></svg>
    <svg class="gh g-z1" viewBox="0 0 20 20"><circle cx="9" cy="9" r="7" fill="none" stroke="#a8c4e4" stroke-width="2"/><path d="M6 9h6" stroke="#a8c4e4" stroke-width="1.500"/><path d="M14 14l4 4" stroke="#a8c4e4" stroke-width="2"/></svg>
    <svg class="gh g-z2" viewBox="0 0 20 20"><circle cx="9" cy="9" r="7" fill="none" stroke="#a8c4e4" stroke-width="2"/><path d="M6 9h6M9 6v6" stroke="#a8c4e4" stroke-width="1.500"/><path d="M14 14l4 4" stroke="#a8c4e4" stroke-width="2"/></svg>
    <svg class="gh g-l" viewBox="0 0 20 32"><path d="M18 1L2 16l16 15z" fill="#a8c4e4" opacity=".55"/></svg>
    <svg class="gh g-r" viewBox="0 0 20 32"><path d="M2 1l16 15L2 31z" fill="#a8c4e4" opacity=".55"/></svg>
    <svg class="gh g-rl" viewBox="0 0 20 20"><path d="M4 10a7 7 0 1 1 7 7" fill="none" stroke="#a8c4e4" stroke-width="2.500"/><path d="M0 8l4 5 4-5z" fill="#a8c4e4"/></svg>
    <svg class="gh g-rr" viewBox="0 0 20 20"><path d="M16 10a7 7 0 1 0-7 7" fill="none" stroke="#a8c4e4" stroke-width="2.500"/><path d="M20 8l-4 5-4-5z" fill="#a8c4e4"/></svg>
    <svg class="gh g-tr" viewBox="0 0 18 22"><path d="M1 4h16M6 4V1h6v3M3 4v17h12V4M7 8v9M11 8v9" fill="none" stroke="#a8c4e4" stroke-width="1.500"/></svg>
    <svg class="gh g-ed" viewBox="0 0 18 22"><path d="M3 1h12v20H3z" fill="none" stroke="#a8c4e4" stroke-width="1.500"/><path d="M6 15l6-8 2 1-6 8z" fill="#a8c4e4"/></svg>
    <svg class="gh g-im" viewBox="0 0 20 20"><circle cx="10" cy="10" r="9.500" fill="#a8c4e4" opacity=".7"/><path d="M5 14l4-5 2 2 2-1 2 4zM5 6h10v8H5z" fill="none" stroke="#567"/></svg>
    <svg class="gh g-h" viewBox="0 0 22 20"><path d="M11 18C3 12 1 9 2 5.500S8 1 11 5q3-4 9-.5t-9 13.500z" fill="none" stroke="#a8c4e4" stroke-width="1.500"/></svg>
    <svg class="gh g-f" viewBox="0 0 22 20"><path d="M2 4h7l2 2h9v13H2z" fill="#cfdff0" stroke="#a8c4e4"/><circle cx="12" cy="11" r="3.500" fill="none" stroke="#fff" stroke-width="1.300"/><path d="M14.500 13.500l3 3" stroke="#fff" stroke-width="1.300"/></svg>
    <span class="g90 g90a">90°</span><span class="g90 g90b">90°</span>
    <span class="blip"></span>
  </div>

  <div class="badge b70">70</div>
  <div class="badge b67">67</div>

  <!-- dialog floating over the drawing -->
  <section class="dialog">
    <div class="dlg-title"><span>三维楼层显示设置</span><span class="dlg-x">×</span></div>
    <fieldset class="grp grp-a">
      <legend>显示设置</legend>
      <div class="radios">
        <span class="rad"><i class="rd on"></i>当前楼层<span class="lt">(<u>C</u>)</span></span>
        <span class="rad"><i class="rd cur"></i>相邻楼层<span class="lt">(<u>X</u>)</span></span>
        <span class="rad"><i class="rd"></i>自定义楼层<span class="lt">(<u>Z</u>)</span></span>
        <span class="rad"><i class="rd"></i>全部楼层<span class="lt">(<u>A</u>)</span></span>
      </div>
    </fieldset>
    <fieldset class="grp grp-b">
      <legend>自定义楼层</legend>
      <div class="dlg-tree">
        <div class="dt-root"><svg class="tw" viewBox="0 0 10 10"><path d="M1 3l4 4 4-4" fill="none" stroke="#333" stroke-width="1.500"/></svg><span class="dots"></span><i class="cb mix"></i>全部楼层</div>
        <div class="dt-kids">
          <div class="dt-k"><i class="cb"></i>第<span class="lt">2</span>层</div>
          <div class="dt-k"><i class="cb chk"><svg viewBox="0 0 12 12"><path d="M2 6l3 3 5-6" fill="none" stroke="#666" stroke-width="1.300"/></svg></i>首层</div>
          <div class="dt-k"><i class="cb"></i>第<span class="lt">-1</span>层</div>
          <div class="dt-k"><i class="cb"></i>基础层</div>
        </div>
      </div>
      <div class="dlg-foot"><button class="dlg-close" type="button">关闭</button></div>
    </fieldset>
  </section>

  <!-- red annotations drawn on the photographed picture -->
  <svg class="annot" viewBox="0 0 1366 768" xmlns="http://www.w3.org/2000/svg">
    <rect x="1223.500" y="85.500" width="103" height="38" fill="none" stroke="#f00" stroke-width="3"/>
    <rect x="1225" y="130" width="11" height="7" fill="none" stroke="#f00" stroke-width="2.400"/>
    <path d="M1224 128L716 254" stroke="#f00" stroke-width="3"/>
    <path d="M708 257l15-11 2 9z" fill="#f00"/>
    <rect x="681.500" y="262.500" width="100" height="26" fill="none" stroke="#f00" stroke-width="3"/>
    <path d="M689 274h4M692 271v6M694 270v7" stroke="#f00" stroke-width="1.200"/>
  </svg>
</div>
</body>
</html>
```
FILE: styles.css
```css
* { box-sizing: border-box; }
html, body { margin: 0; padding: 0; }
body { background: #000; font: 12px/1.2 "Noto Sans CJK SC", "Liberation Sans", sans-serif; color: #3a3a3a; }
.sprite { position: absolute; width: 0; height: 0; }
.screen { position: relative; width: 1366px; height: 768px; overflow: hidden; display: flex; flex-direction: column; background: #f1f1f1; filter: blur(.35px); }
.lt { font: 10px "Liberation Mono", monospace; }

/* viewer bar */
.viewer-bar { height: 29px; flex: none; background: #4a7ad0; display: flex; align-items: center; padding-left: 9px; color: #fff; }
.viewer-logo { width: 16px; height: 16px; margin-right: 4px; }
.viewer-title { font-size: 12px; letter-spacing: .05px; white-space: pre; color: #f4f7fc; }
.viewer-ctrls { margin-left: auto; display: flex; align-items: center; height: 100%; margin-right: 14px; }
.vc { width: 14px; height: 14px; margin-left: 16px; }
.vc-x { margin-left: 20px; width: 15px; height: 15px; }

/* stage + app */
.stage { flex: none; height: 699px; padding: 5px 15px 2px 14px; background: linear-gradient(90deg, #f1f1f1 0, #f1f1f1 1351px, #fbfbfb 1351px); }
.app { width: 1337px; height: 692px; display: flex; flex-direction: column; background: #f1f1f1; box-shadow: 0 0 3px rgba(0,0,0,.35); }
.app-title { height: 23px; flex: none; background: #fff; display: flex; align-items: center; padding-left: 3px; }
.app-logo { width: 16px; height: 16px; margin-right: 4px; }
.app-name { color: #8a8a8a; font-size: 12px; letter-spacing: .15px; white-space: nowrap; }
.win-ctrls { margin-left: auto; display: flex; margin-right: 19px; }
.wc { width: 12px; height: 12px; margin-left: 32px; }

.menu { height: 30px; flex: none; display: flex; align-items: center; background: #f1f1f1; white-space: nowrap; }
.mi { color: #333; }
.mg { margin-left: 9.400px; }
.hint { margin-left: 34px; width: 163px; color: #555; background: #f8f8f8; line-height: 30px; }
.chev-end { margin-left: auto; margin-right: 3px; }

.m1{margin-left:1px}.m2{margin-left:2px}.m3{margin-left:3px}.m4{margin-left:4px}.m5{margin-left:5px}.m6{margin-left:6px}.m7{margin-left:7px}.m8{margin-left:8px}.m9{margin-left:9px}.m19{margin-left:19px}.m27{margin-left:27px}.m37{margin-left:37px}

.ic { width: 16px; height: 16px; flex: none; display: block; }
.ic18 { width: 18px; height: 18px; }
.dd { display: inline-block; flex: none; width: 8px; height: 4px; position: relative; }
.dd::after { content: ""; position: absolute; left: 1px; top: 0; border: 3px solid transparent; border-top: 4px solid #333; border-bottom: 0; }
.dd.off::after { border-top-color: #aaa; }
.chev { display: inline-block; flex: none; width: 8px; height: 8px; position: relative; }
.chev::before { content: "»"; position: absolute; left: 0; top: -7px; font: bold 13px/14px "Liberation Sans", sans-serif; color: #222; }
.sep { display: block; flex: none; width: 1px; height: 19px; background: #c6c6c6; }
.grip { display: block; flex: none; width: 3px; height: 19px; background: repeating-linear-gradient(180deg, #aaa 0 2px, transparent 2px 4px); }
.tb { display: flex; align-items: center; flex: none; white-space: nowrap; }
.tool { display: flex; align-items: center; gap: 4px; flex: none; }
.g2 { gap: 2px; } .g3 { gap: 3px; } .g4 { gap: 4px; } .g5 { gap: 5px; } .g6 { gap: 6px; }
.dis { color: #a2a2a2; }
.sigma { width: 16px; text-align: center; font: bold 14px "Liberation Serif", serif; color: #222; }
.tb1 { height: 26px; }
.pane3d { display: flex; align-items: center; background: #fafafa; margin-left: 8px; padding-left: 3px; width: 48px; height: 26px; }
.pane3d .tool { margin-left: 2px; }
.btn-on { background: #d7e8f7; border: 1px solid #6ba6d2; }
.floors { height: 20px; width: 74px; margin-left: 1px; padding-left: 4px; }

.work { flex: 1; display: flex; min-height: 0; }
.nav { width: 167px; flex: none; display: flex; flex-direction: column; padding: 3px 4px 0 1px; }
.nav-head { height: 16px; flex: none; border: 1px solid #9a9a9a; border-bottom-width: 2px; display: flex; align-items: center; color: #111; font-size: 12.400px; line-height: 14px; }
.nav-head span { margin-right: auto; }
.nh-ic { width: 10px; height: 10px; margin-right: 5px; margin-left: 5px; }
.nav-btn { height: 21px; flex: none; margin: 1px 0 0 1px; background: #f4f4f4; border: 1px solid #c4c4c4; border-bottom: 2px solid #9d9d9d; text-align: center; line-height: 18px; color: #333; }
.nav-tools { height: 26px; flex: none; display: flex; align-items: center; padding-left: 4px; gap: 4px; margin-left: 1px; }
.nt { width: 18px; height: 15px; }
.tree { flex: 1; min-height: 0; margin-left: 1px; background: #fff; border: 1px solid #9a9a9a; padding-top: 1px; }
.node { height: 15.700px; display: flex; align-items: center; color: #333; }
.tw { width: 10px; height: 10px; margin-left: 7px; flex: none; }
.fd { width: 18px; height: 14px; margin-left: 3px; margin-right: 4px; flex: none; }
.kids { position: relative; }
.kids::before { content: ""; position: absolute; left: 12px; top: 0; bottom: 0; border-left: 1px dotted #aaa; }
.kid { height: 15.700px; display: flex; align-items: center; position: relative; padding-left: 42px; color: #333; }
.kid::before { content: ""; position: absolute; left: 31px; width: 11px; top: 50%; border-top: 1px dotted #aaa; }
.kid::after { content: ""; position: absolute; left: 31px; top: -8px; height: 16px; border-left: 1px dotted #aaa; }
.ki { width: 14px; height: 14px; flex: none; margin-right: 6px; }
.sel { background: #ddd; padding-right: 3px; line-height: 15px; }
.cad-ic { width: 14px; height: 14px; margin-left: 5px; }
.new { font: bold 8px "Liberation Sans", sans-serif; color: #222; background: #f7e04a; align-self: flex-start; line-height: 8px; margin-top: -1px; }
.nav-foot { margin-top: 2px; height: 20px; }
.nb-last { margin-top: 0; height: 24px; border-bottom: 1px solid #c4c4c4; }

.main { flex: 1; display: flex; flex-direction: column; min-width: 0; }
.tb2 { height: 28px; }
.tb3 { height: 29px; }
.tb4 { height: 26px; }
.strip { display: flex; align-items: center; background: #f9f9f9; height: 100%; padding-right: 3px; }
.tb2 .strip { height: 24px; margin-top: 2px; } .tb3 .strip { height: 25px; } .tb4 .strip { height: 24px; }
.s4b { margin-left: 4px; width: 25px; padding-left: 3px; }
.combo { display: flex; justify-content: space-between; align-items: center; flex: none; background: #fff; height: 22px; padding-right: 1px; }
.cut { overflow: hidden; width: 54px; white-space: nowrap; }
.w54 { width: 54px; } .w64 { width: 64px; } .w65 { width: 65px; } .w66 { width: 66px; } .w56 { width: 56px; } .w73 { width: 73px; } .w50 { width: 50px; }
.sel-btn { width: 49px; height: 22px; gap: 4px; }

.cad { flex: none; height: 496px; background: #000; }
.cad-svg { display: block; width: 1170px; height: 496px; }
.g-line path { stroke: #1b7a1b; fill: none; stroke-width: 1; }
.bubbles use { fill: none; stroke: #1a6e1a; stroke-width: 1; }
.r-line path { stroke: #e01414; fill: none; stroke-width: 1.200; }
.r-dim path { stroke: #a81414; fill: none; stroke-width: 1; }
.w-tick { stroke: #a8c8a8; fill: none; }
.dim-t text { font: 14.400px "Liberation Sans", sans-serif; fill: #bdbdbd; text-anchor: middle; }
.bub-t text { font: 13px "Liberation Sans", sans-serif; fill: #c4c4c4; text-anchor: middle; }
.ax { font: 14px "Liberation Sans", sans-serif; }
.ax-y { fill: #19a019; } .ax-x { fill: #b81414; } .ax-z { fill: #1e50b4; }

.status { flex: 1; min-height: 0; display: flex; align-items: center; border-top: 2px solid #2c2c2c; background: #f4f4f4; white-space: nowrap; padding-bottom: 2px; }
.st-btn { height: 23px; padding-left: 2px; }
.st-combo { width: 40px; background: #fff; height: 22px; line-height: 22px; padding-left: 2px; flex: none; }
.st-dd { display: flex; align-items: center; justify-content: center; width: 14px; height: 18px; background: #b9cfe6; flex: none; }
.lab { color: #8a8a8a; flex: none; }
.st-txt { flex: none; }
.field { flex: none; height: 23px; display: flex; align-items: center; justify-content: flex-end; border: 1px solid #8d8d8d; background: #f6f6f6; }
.val { color: #8a8a8a; font: 13px "Liberation Sans", sans-serif; margin-right: 5px; }
.spin { width: 16px; height: 100%; display: flex; flex-direction: column; justify-content: space-between; align-items: center; padding: 3px 0; }
.spin i { display: block; border: 3px solid transparent; border-bottom: 4px solid #777; border-top: 0; }
.spin i.dn { border-bottom: 0; border-top: 4px solid #777; }

/* task bar */
.taskbar { position: relative; flex: 1; min-height: 0; display: flex; align-items: center; background: #000; color: #eee; }
.start { width: 48px; display: flex; justify-content: center; flex: none; }
.win { width: 16px; height: 16px; }
.search { width: 344px; height: 100%; background: #2d2d2d; display: flex; align-items: center; flex: none; padding-left: 10px; }
.ring { width: 20px; height: 20px; border: 2px solid #e6e6e6; border-radius: 50%; margin-right: 6px; flex: none; }
.s-text { color: #9a9a9a; font-size: 14px; }
.mic { width: 12px; height: 18px; margin-left: auto; margin-right: 15px; }
.task-icons { display: flex; align-items: center; height: 100%; margin-left: 1px; flex: none; }
.ti { width: 49px; height: 100%; display: flex; align-items: center; justify-content: center; flex: none; }
.ti-b { margin-right: 5px; }
.ti svg { width: 24px; height: 24px; }
.ti-act { background: #333; margin-left: 0; }
.cpu { position: absolute; left: 990px; top: 1px; width: 68px; display: flex; flex-direction: column; align-items: center; font-size: 12.500px; line-height: 20px; white-space: nowrap; }
.tray { position: absolute; left: 1066px; top: 0; height: 100%; display: flex; align-items: center; gap: 8px; }
.tr { width: 16px; height: 16px; flex: none; }
.ime { font-size: 14px; color: #fff; margin-left: 1px; }
.sg { margin-left: 6px; width: 18px; height: 18px; }
.clock { position: absolute; left: 1250px; top: 1px; width: 60px; display: flex; flex-direction: column; align-items: center; font-size: 12.500px; line-height: 20px; }
.notif { position: absolute; left: 1324px; top: 11px; width: 18px; height: 18px; }
.runs { position: absolute; left: 0; bottom: 0; width: 100%; height: 2px; }
.runs i { position: absolute; top: 0; height: 2px; background: #82b8ea; }
.r1 { left: 648px; width: 38px; } .r2 { left: 696px; width: 41px; } .r3 { left: 746px; width: 41px; } .r4 { left: 791px; width: 47px; } .r5 { left: 844px; width: 44px; }

/* floating things */
.ghosts { position: absolute; inset: 0; pointer-events: none; }
.gh { position: absolute; }
.g-info { left: 18px; top: 699px; width: 19px; height: 19px; }
.g-gift { left: 50px; top: 700px; width: 19px; height: 19px; }
.g-z1 { left: 427px; top: 699px; width: 19px; height: 19px; }
.g-z2 { left: 505px; top: 699px; width: 19px; height: 19px; }
.g-l { left: 641px; top: 696px; width: 17px; height: 28px; }
.g-r { left: 713px; top: 696px; width: 17px; height: 28px; }
.g-rl { left: 763px; top: 699px; width: 18px; height: 18px; }
.g-rr { left: 799px; top: 699px; width: 18px; height: 18px; }
.g-tr { left: 844px; top: 698px; width: 15px; height: 22px; }
.g-ed { left: 882px; top: 698px; width: 15px; height: 22px; }
.g-im { left: 922px; top: 700px; width: 17px; height: 17px; }
.g-h { left: 1291px; top: 699px; width: 20px; height: 19px; }
.g-f { left: 1330px; top: 699px; width: 20px; height: 19px; }
.g90 { position: absolute; top: 711px; font: 9px "Liberation Sans", sans-serif; color: #9fbcdc; }
.g90a { left: 765px; } .g90b { left: 801px; }
.blip { position: absolute; left: 1158px; top: 720px; width: 15px; height: 4px; background: #ef8a5a; border-radius: 8px 8px 0 0; }

.badge { position: absolute; display: flex; justify-content: center; color: #fff; font: bold 11px "Liberation Sans", sans-serif; background: #3fb54c; border-radius: 50%; }
.b70 { left: 1064px; top: -29px; width: 46px; height: 48px; padding-top: 34px; border: 2px solid #c2c8c2; box-shadow: 0 1px 3px rgba(0,0,0,.4); }
.b67 { left: 1057px; top: 34px; width: 44px; height: 18px; border-radius: 0 0 22px 22px; padding-top: 2px; border: 2px solid #c2c8c2; border-top: 0; }

.dialog { position: absolute; left: 550px; top: 222px; width: 268px; height: 373px; background: #f0f0f0; border: 1px solid #aaa; display: flex; flex-direction: column; padding: 0 2px; color: #333; }
.dlg-title { height: 24px; margin: 0 -2px; flex: none; background: #fff; display: flex; align-items: center; justify-content: space-between; padding-left: 2px; font-size: 12px; color: #444; }
.dlg-x { width: 19px; height: 18px; background: #c64f4f; color: #fff; text-align: center; line-height: 17px; font-size: 10px; margin-right: 1px; }
.grp { margin: 0; padding: 0; border: 1px solid #e0e0e0; min-width: 0; }
.grp legend { padding: 0; margin-left: 9px; font-size: 12px; line-height: 14px; color: #333; }
.grp-a { height: 65px; margin-top: 2px; }
.radios { display: grid; grid-template-columns: 125px 1fr; grid-auto-rows: 23px; padding: 1px 0 0 7px; }
.rad { display: flex; align-items: center; white-space: nowrap; }
.rd { width: 13px; height: 13px; border: 1px solid #555; border-radius: 50%; margin-right: 3px; background: #fff; position: relative; flex: none; }
.rd.on::after { content: ""; position: absolute; inset: 2px; border-radius: 50%; background: #333; }
.grp-b { flex: 1; margin-top: 6px; margin-bottom: 4px; padding: 5px 6px 0 3px; display: flex; flex-direction: column; }
.dlg-tree { height: 220px; flex: none; background: #fff; border: 1px solid #9a9a9a; color: #8c8c8c; padding-top: 2px; }
.dt-root { display: flex; align-items: center; height: 13px; }
.dt-root .tw { margin-left: 8px; }
.dots { width: 4px; height: 1px; border-top: 1px dotted #888; margin: 0 1px; }
.cb { display: block; width: 12px; height: 12px; border: 1px solid #555; background: #fff; margin-right: 3px; flex: none; position: relative; }
.cb svg { position: absolute; left: -1px; top: -1px; width: 12px; height: 12px; }
.cb.mix::after { content: ""; position: absolute; inset: 2px; background: #333; }
.dt-kids { margin-left: 32px; border-left: 1px dotted #999; padding-left: 10px; margin-top: 0; }
.dt-k { height: 13.700px; display: flex; align-items: center; white-space: nowrap; }
.dlg-foot { display: flex; justify-content: flex-end; padding-top: 7px; }
.dlg-close { width: 67px; height: 22px; font: 12px "Noto Sans CJK SC", sans-serif; color: #333; background: #e1e1e1; border: 1px solid #adadad; padding: 0; }

.annot { position: absolute; left: 0; top: 0; width: 1366px; height: 768px; pointer-events: none; }
```
